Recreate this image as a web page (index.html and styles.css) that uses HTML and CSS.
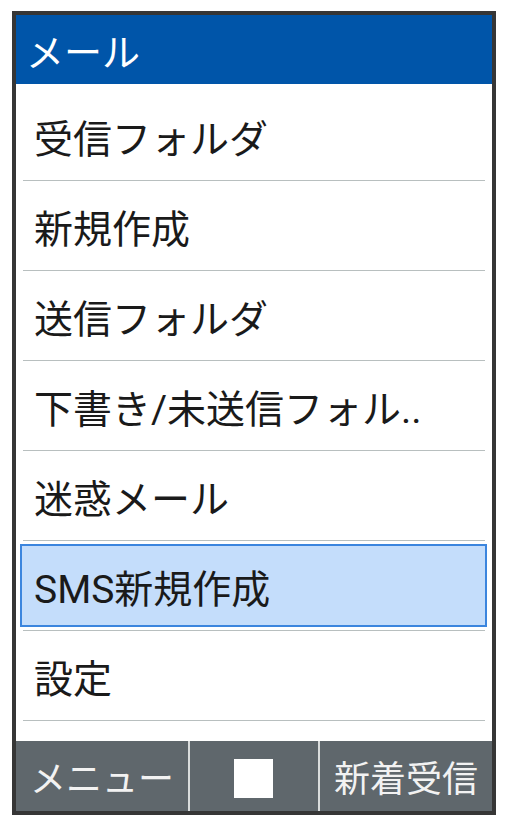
FILE: index.html
```html
<!DOCTYPE html>
<html lang="ja">
<head>
  <meta charset="UTF-8" />
  <title>メール</title>
  <meta name="viewport" content="width=device-width, initial-scale=1" />
  <link rel="stylesheet" href="styles.css">
</head>
<body>
  <div class="phone">
    <header class="title">メール</header>
    <ul class="menu">
      <li class="item"><span class="label">受信フォルダ</span></li>
      <li class="item"><span class="label">新規作成</span></li>
      <li class="item"><span class="label">送信フォルダ</span></li>
      <li class="item"><span class="label">下書き/未送信フォル..</span></li>
      <li class="item"><span class="label">迷惑メール</span></li>
      <li class="item selected"><span class="label">SMS新規作成</span></li>
      <li class="item"><span class="label">設定</span></li>
    </ul>
    <footer class="softkeys">
      <div class="key">メニュー</div>
      <div class="key"><span class="square"></span></div>
      <div class="key">新着受信</div>
    </footer>
  </div>
</body>
</html>
```

FILE: styles.css
```css
:root {
  --frame: #363636;
  --blue: #0055a9;
  --line: #b8bfbf;
  --sel-bg: #c4ddfb;
  --sel-border: #3b85de;
  --keys: #5f676c;
}
body {
  margin: 0;
  background: #fff;
  font-family: Roboto, "Noto Sans CJK JP", sans-serif;
  color: #1a1a1a;
}
.phone {
  margin: 11px 0 0 12px;
  width: 484px;
  height: 804px;
  box-sizing: border-box;
  border: 4px solid var(--frame);
  display: flex;
  flex-direction: column;
}
.title {
  height: 69px;
  background: var(--blue);
  color: #fff;
  font-size: 38px;
  display: flex;
  align-items: center;
  padding-left: 10px;
  flex-shrink: 0;
}
.menu {
  list-style: none;
  margin: 0;
  padding: 7px 0 0;
  flex: 1;
}
.item {
  height: 90px;
  box-sizing: border-box;
  padding: 3px 5px 4px 4px;
  background: linear-gradient(var(--line), var(--line)) center bottom / calc(100% - 14px) 1px no-repeat;
}
.label {
  height: 100%;
  box-sizing: border-box;
  display: flex;
  align-items: center;
  padding-left: 13px;
  border: 1px solid transparent;
  font-size: 39px;
  white-space: nowrap;
}
.selected .label {
  background: var(--sel-bg);
  border: 2px solid var(--sel-border);
  padding-left: 12px;
}
.softkeys {
  height: 70px;
  flex-shrink: 0;
  display: grid;
  grid-template-columns: 172px 130px 1fr;
  background: var(--keys);
  color: #f2f2f2;
  font-size: 36px;
}
.key {
  display: flex;
  align-items: center;
  justify-content: center;
}
.key + .key {
  border-left: 2px solid #d9dcdc;
}
.square {
  width: 39px;
  height: 39px;
  background: #fff;
  margin: 4px 2px 0 0;
}
```
